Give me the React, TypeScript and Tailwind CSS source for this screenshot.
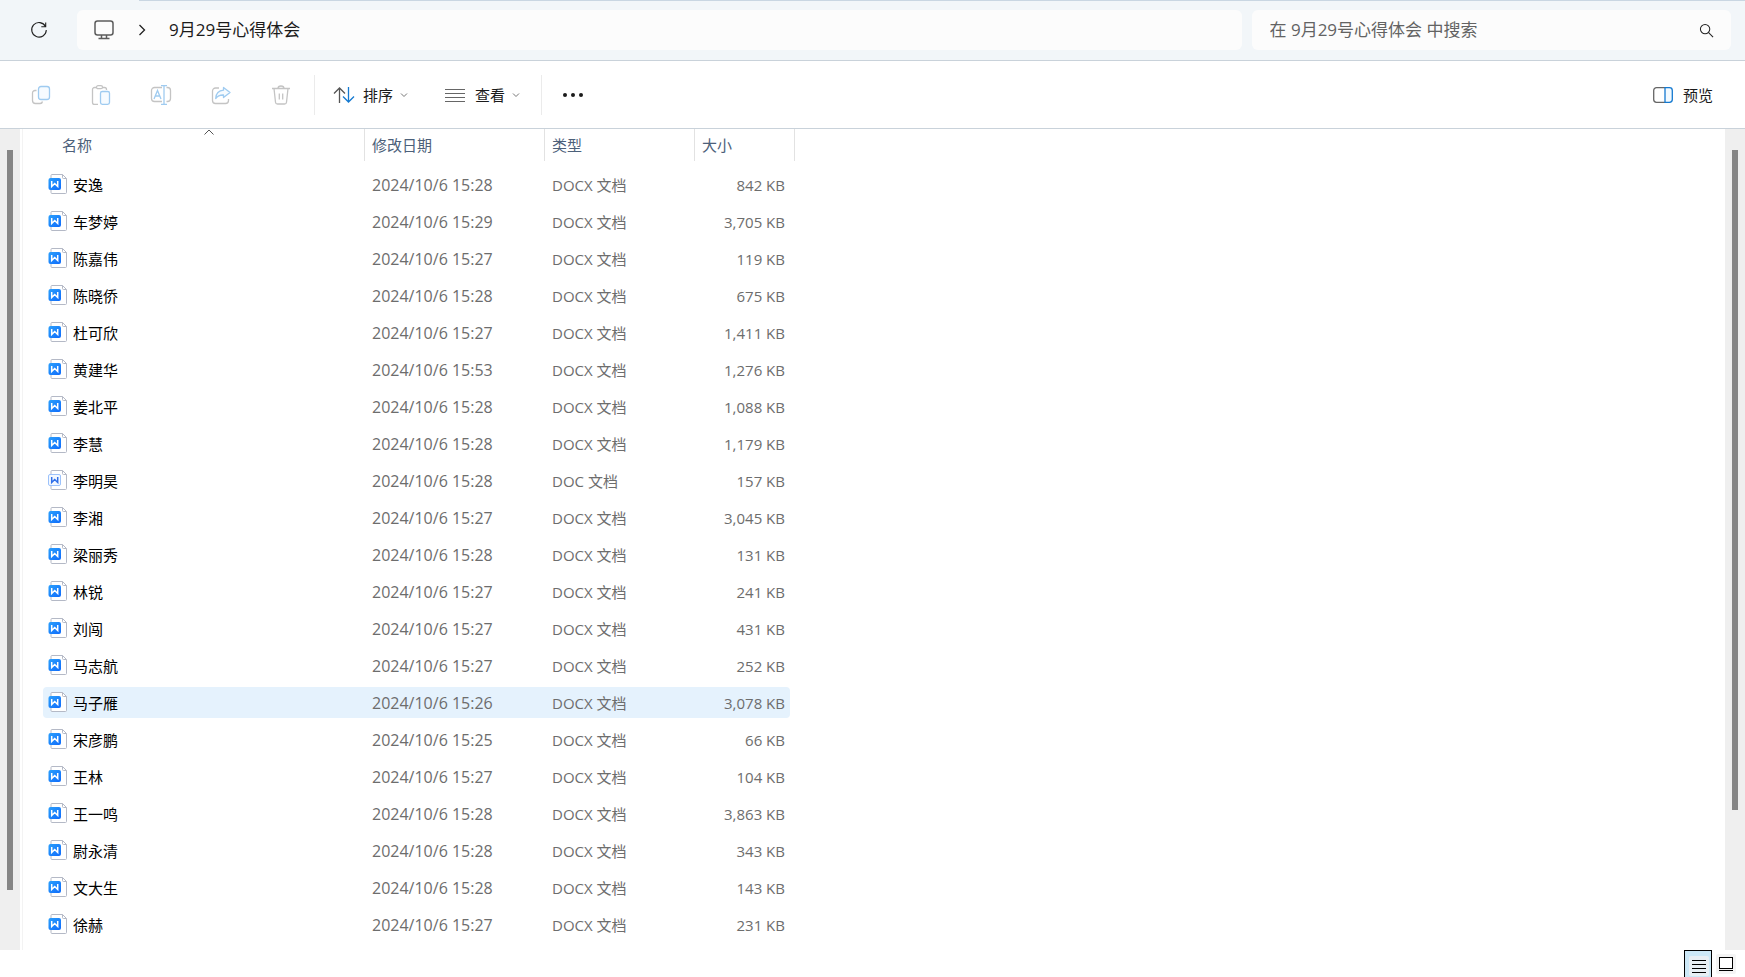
import { useState } from 'react'

const files = [
  { name: '安逸', date: '2024/10/6 15:28', type: 'DOCX 文档', size: '842 KB' },
  { name: '车梦婷', date: '2024/10/6 15:29', type: 'DOCX 文档', size: '3,705 KB' },
  { name: '陈嘉伟', date: '2024/10/6 15:27', type: 'DOCX 文档', size: '119 KB' },
  { name: '陈晓侨', date: '2024/10/6 15:28', type: 'DOCX 文档', size: '675 KB' },
  { name: '杜可欣', date: '2024/10/6 15:27', type: 'DOCX 文档', size: '1,411 KB' },
  { name: '黄建华', date: '2024/10/6 15:53', type: 'DOCX 文档', size: '1,276 KB' },
  { name: '姜北平', date: '2024/10/6 15:28', type: 'DOCX 文档', size: '1,088 KB' },
  { name: '李慧', date: '2024/10/6 15:28', type: 'DOCX 文档', size: '1,179 KB' },
  { name: '李明昊', date: '2024/10/6 15:28', type: 'DOC 文档', size: '157 KB' },
  { name: '李湘', date: '2024/10/6 15:27', type: 'DOCX 文档', size: '3,045 KB' },
  { name: '梁丽秀', date: '2024/10/6 15:28', type: 'DOCX 文档', size: '131 KB' },
  { name: '林锐', date: '2024/10/6 15:27', type: 'DOCX 文档', size: '241 KB' },
  { name: '刘闯', date: '2024/10/6 15:27', type: 'DOCX 文档', size: '431 KB' },
  { name: '马志航', date: '2024/10/6 15:27', type: 'DOCX 文档', size: '252 KB' },
  { name: '马子雁', date: '2024/10/6 15:26', type: 'DOCX 文档', size: '3,078 KB' },
  { name: '宋彦鹏', date: '2024/10/6 15:25', type: 'DOCX 文档', size: '66 KB' },
  { name: '王林', date: '2024/10/6 15:27', type: 'DOCX 文档', size: '104 KB' },
  { name: '王一鸣', date: '2024/10/6 15:28', type: 'DOCX 文档', size: '3,863 KB' },
  { name: '尉永清', date: '2024/10/6 15:28', type: 'DOCX 文档', size: '343 KB' },
  { name: '文大生', date: '2024/10/6 15:28', type: 'DOCX 文档', size: '143 KB' },
  { name: '徐赫', date: '2024/10/6 15:27', type: 'DOCX 文档', size: '231 KB' },
]

function DocIcon({ legacy }: { legacy: boolean }) {
  return (
    <svg width="20" height="20" viewBox="0 0 20 20" fill="none" className="mb-[2px] shrink-0">
      <defs>
        <linearGradient id="docBlue" x1="0" y1="0" x2="1" y2="1">
          <stop offset="0" stopColor="#2ba0fc" />
          <stop offset="1" stopColor="#0f6bfb" />
        </linearGradient>
      </defs>
      <path d="M4 .5h10.500l4 4v14a1 1 0 0 1-1 1H4a1 1 0 0 1-1-1v-17a1 1 0 0 1 1-1Z" fill="#fff" stroke="#b4b9c6" />
      <path d="M14.5.5v3a1 1 0 0 0 1 1h3" stroke="#b4b9c6" />
      {legacy ? (
        <rect x=".5" y="4.5" width="12" height="11" rx="1.5" fill="#f3f8ff" stroke="#9cc2fb" />
      ) : (
        <rect x=".5" y="4" width="12.5" height="12" rx="2" fill="url(#docBlue)" />
      )}
      <path d="M3.700 7v5.500L6.700 9.500l3 3V7" stroke={legacy ? '#2f6fe8' : '#fff'} strokeWidth="1.500" />
    </svg>
  )
}

function Chevron() {
  return (
    <svg width="8" height="6" viewBox="0 0 8 6" fill="none" stroke="#777">
      <path d="m1 1.5 3 3 3-3" />
    </svg>
  )
}

function CopyIcon() {
  return (
    <svg width="20" height="20" viewBox="0 0 20 20" fill="none" strokeWidth="1.3">
      <path d="M5.5 5.5H4A2.5 2.5 0 0 0 1.5 8v7.5a3 3 0 0 0 3 3H9a2.5 2.5 0 0 0 2.5-2" stroke="#c4c4c4" />
      <rect x="7.5" y="1.5" width="11" height="13" rx="2.5" stroke="#9fcbf0" fill="#f6fbff" />
    </svg>
  )
}

function PasteIcon() {
  return (
    <svg width="20" height="20" viewBox="0 0 20 20" fill="none" strokeWidth="1.3">
      <path d="M5.5 2.5h-2a2 2 0 0 0-2 2v13a2 2 0 0 0 2 2H7M11.5 2.5h2a2 2 0 0 1 2 2V5" stroke="#c4c4c4" />
      <rect x="5.5" y=".7" width="6" height="3" rx="1.5" stroke="#c4c4c4" />
      <rect x="9.5" y="6.5" width="9" height="12.8" rx="1.8" stroke="#9fcbf0" fill="#f6fbff" />
    </svg>
  )
}

function RenameIcon() {
  return (
    <svg width="22" height="20" viewBox="0 0 22 20" fill="none" strokeWidth="1.3">
      <path d="M12 2.500H4.500a3 3 0 0 0-3 3v8a3 3 0 0 0 3 3H12M16.500 2.500h1a3 3 0 0 1 3 3v8a3 3 0 0 1-3 3h-1" stroke="#c4c4c4" />
      <path d="M11 .7h6M14 .7v18.600M11 19.300h6M4 14 7.500 5.500 11 14M5.200 11h4.600" stroke="#9fcbf0" />
    </svg>
  )
}

function ShareIcon() {
  return (
    <svg width="20" height="20" viewBox="0 0 20 20" fill="none" strokeWidth="1.3" strokeLinejoin="round">
      <path d="M8 3H4.500a3 3 0 0 0-3 3v9.500a3 3 0 0 0 3 3h10a3 3 0 0 0 3-3V14" stroke="#c4c4c4" />
      <path d="M12.500 2.500 19 7.500l-6.500 5V10C8.500 9.800 6.500 11 4.700 13.500 5 9 7.500 5.500 12.500 5.200Z" stroke="#9fcbf0" fill="#f6fbff" />
    </svg>
  )
}

function TrashIcon() {
  return (
    <svg width="20" height="20" viewBox="0 0 20 20" fill="none" stroke="#c4c4c4" strokeWidth="1.3">
      <path d="M1 3.500h18M7 3.500a3 2.500 0 0 1 6 0M3 3.500l1.500 13.700a2 2 0 0 0 2 1.800h7a2 2 0 0 0 2-1.800L17 3.500M8.300 8.500v6M11.700 8.500v6" />
    </svg>
  )
}

const tools = [
  { label: '复制', icon: <CopyIcon /> },
  { label: '粘贴', icon: <PasteIcon /> },
  { label: '重命名', icon: <RenameIcon /> },
  { label: '共享', icon: <ShareIcon /> },
  { label: '删除', icon: <TrashIcon /> },
]

export default function App() {
  const [query, setQuery] = useState('')
  const [hovered, setHovered] = useState('马子雁')

  const headCls = 'flex h-8 items-center border-r border-[#e2e2e2] text-[#4c607a]'
  const cellCls = 'flex h-[31px] items-center'

  return (
    <div className="flex min-h-screen flex-col bg-white font-['Open_Sans','Noto_Sans_CJK_SC',sans-serif] text-[15px] leading-5 text-[#1b1b1b]">
      {/* Address bar */}
      <header className="relative flex h-[61px] items-center border-b border-[#c9d2da] bg-[#f2f6f9] pr-[14px]">
        <div className="absolute top-0 right-0 left-[139px] h-px bg-[#c9d6e2]" />
        <button aria-label="刷新" className="flex w-[77px] justify-center">
          <svg width="18" height="18" viewBox="0 0 18 18" fill="none" stroke="#222" strokeWidth="1.1">
            <path d="M15.500 5.500A7.300 7.300 0 1 0 16.300 9M15.700 1.500v4.300h-4.400" />
          </svg>
        </button>
        <nav className="flex h-10 flex-1 items-center rounded-md bg-[#fcfcfc] pl-4">
          <svg width="22" height="20" viewBox="0 0 22 20" fill="none" stroke="#5c5c5c" strokeWidth="1.5">
            <rect x="2" y="1" width="18" height="14" rx="2.5" />
            <path d="M8.500 15v3M13.500 15v3M5.500 18.500h11" />
          </svg>
          <svg width="8" height="12" viewBox="0 0 8 12" fill="none" stroke="#222" strokeWidth="1.3" className="ml-[23px]">
            <path d="m1.500 1 5 5-5 5" />
          </svg>
          <a href="#" className="ml-[23px] text-[17px] leading-6">9月29号心得体会</a>
        </nav>
        <div className="ml-[10px] flex h-10 w-[27.7%] items-center rounded-md bg-[#fcfcfc] pr-[17px] pl-[18px]">
          <input
            aria-label="搜索"
            value={query}
            onChange={(e) => setQuery(e.target.value)}
            placeholder="在 9月29号心得体会 中搜索"
            className="min-w-0 flex-1 bg-transparent text-[17px] leading-6 outline-none placeholder:text-[#636363]"
          />
          <button aria-label="开始搜索">
            <svg width="15" height="15" viewBox="0 0 16 16" fill="none" stroke="#222" strokeWidth="1.1">
              <circle cx="6.5" cy="6.5" r="5" />
              <path d="m10 10 5 5" />
            </svg>
          </button>
        </div>
      </header>

      {/* Toolbar */}
      <div className="flex h-[68px] items-center border-b border-[#c9d2da] pl-[11px]">
        {tools.map((t) => (
          <button key={t.label} aria-label={t.label} disabled className="flex w-[60px] justify-center">
            {t.icon}
          </button>
        ))}
        <div className="ml-[3px] h-10 w-px bg-[#ebebeb]" />
        <button className="ml-[18px] flex items-center">
          <svg width="22" height="18" viewBox="0 0 22 18" fill="none" strokeWidth="1.3">
            <path d="M6.500 17V2M1 7.500 6.500 2 12 7.500" stroke="#555" />
            <path d="M15.500 1v15M10 10.500l5.500 5.500 5.500-5.500" stroke="#1479d0" />
          </svg>
          <span className="mr-[7px] ml-2">排序</span>
          <Chevron />
        </button>
        <button className="ml-[37px] flex items-center">
          <svg width="20" height="14" viewBox="0 0 20 14" stroke="#666">
            <path d="M0 1.500h20M0 5.500h20M0 9.500h20M0 13.500h20" />
          </svg>
          <span className="mr-[7px] ml-[10px]">查看</span>
          <Chevron />
        </button>
        <div className="ml-[21px] h-10 w-px bg-[#ebebeb]" />
        <button aria-label="更多" className="ml-5">
          <svg width="22" height="6" viewBox="0 0 22 6" fill="#1b1b1b">
            <circle cx="3" cy="3" r="2" />
            <circle cx="11" cy="3" r="2" />
            <circle cx="19" cy="3" r="2" />
          </svg>
        </button>
        <button className="mr-8 ml-auto flex items-center gap-[10px]">
          <svg width="20" height="16" viewBox="0 0 20 16" fill="none" strokeWidth="1.3">
            <path d="M12 .7H3.500A2.800 2.800 0 0 0 .7 3.500v9a2.800 2.800 0 0 0 2.800 2.800H12" stroke="#666" />
            <path d="M12 .7h4.500a2.800 2.800 0 0 1 2.800 2.800v9a2.800 2.800 0 0 1-2.800 2.800H12Z" stroke="#1479d0" fill="#f3faff" />
          </svg>
          预览
        </button>
      </div>

      {/* File list */}
      <main className="flex flex-1">
        <div className="flex w-5 shrink-0 justify-center bg-[#efefef] pt-[21px]">
          <div className="h-[92.5%] w-[6px] bg-[#868686]" />
        </div>
        <div className="ml-[2px] flex-1 border-l border-[#f3f3f3] pl-5">
          <table className="w-[752px] table-fixed border-collapse text-left">
            <colgroup>
              <col className="w-[322px]" />
              <col className="w-[180px]" />
              <col className="w-[150px]" />
              <col className="w-[100px]" />
            </colgroup>
            <thead>
              <tr className="h-[37px] align-top">
                <th className="relative p-0 font-normal">
                  <div className={`${headCls} pl-[19px]`}>名称</div>
                  <svg width="10" height="6" viewBox="0 0 10 6" fill="none" stroke="#555" className="absolute top-0 left-[161px]">
                    <path d="m.5 5.500 4.500-4.500 4.500 4.500" />
                  </svg>
                </th>
                <th className="p-0 font-normal"><div className={`${headCls} pl-[7px]`}>修改日期</div></th>
                <th className="p-0 font-normal"><div className={`${headCls} pl-[7px]`}>类型</div></th>
                <th className="p-0 font-normal"><div className={`${headCls} pl-[7px]`}>大小</div></th>
              </tr>
            </thead>
            <tbody>
              {files.map((f) => {
                const bg = f.name === hovered ? 'bg-[#e5f2fd]' : ''
                return (
                  <tr key={f.name} onMouseEnter={() => setHovered(f.name)} className="h-[37px] text-[#6d6d6d]">
                    <td className="p-0">
                      <div className={`${cellCls} ${bg} gap-[5px] rounded-l-sm pl-[5px] text-black`}>
                        <DocIcon legacy={f.type.startsWith('DOC ')} />
                        {f.name}
                      </div>
                    </td>
                    <td className="p-0"><div className={`${cellCls} ${bg} pl-[7px] text-base`}>{f.date}</div></td>
                    <td className="p-0"><div className={`${cellCls} ${bg} pl-[7px]`}>{f.type}</div></td>
                    <td className="p-0">
                      <div className={`${cellCls} ${bg} mr-[5px] justify-end rounded-r-sm pr-[5px]`}>{f.size}</div>
                    </td>
                  </tr>
                )
              })}
            </tbody>
          </table>
        </div>
        <div className="flex w-5 shrink-0 justify-center bg-[#efefef] pt-[21px]">
          <div className="h-[82.5%] w-[6px] bg-[#868686]" />
        </div>
      </main>

      {/* View switch */}
      <footer className="flex h-[27px] items-start justify-end gap-1 pr-[9px]">
        <button aria-label="详细信息" className="flex h-[27px] w-7 items-end justify-end border border-b-0 border-black bg-[#cce8f7] pr-[2px] pb-px">
          <svg width="20" height="20" viewBox="0 0 20 20" stroke="#000">
            <rect width="20" height="20" rx="2" fill="#e8eff4" stroke="none" />
            <path d="M3 4.500h14M3 8.500h14M3 12.500h14M3 16.500h14" />
          </svg>
        </button>
        <button aria-label="大图标" className="mt-1">
          <svg width="20" height="20" viewBox="0 0 20 20" stroke="#000" fill="#fff">
            <rect width="20" height="20" rx="2" fill="#f4f4f4" stroke="none" />
            <rect x="3.5" y="3.5" width="13" height="11" />
            <path d="M3 16.500h14" />
          </svg>
        </button>
      </footer>
    </div>
  )
}
